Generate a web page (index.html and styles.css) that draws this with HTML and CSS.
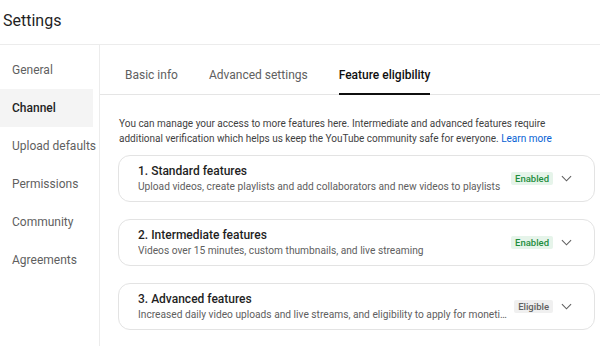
FILE: index.html
```html
<!DOCTYPE html>
<html lang="en">
<head>
<meta charset="UTF-8">
<title>Settings</title>
<meta name="viewport" content="width=device-width, initial-scale=1.0">
<link rel="stylesheet" href="styles.css">
</head>

<body>

<header class="top">
<h1>Settings</h1>
</header>

<div class="main">

<nav class="side">
<a class="item">General</a>
<a class="item on">Channel</a>
<a class="item">Upload defaults</a>
<a class="item">Permissions</a>
<a class="item">Community</a>
<a class="item">Agreements</a>
</nav>

<section class="pane">

<div class="tabs">
<span class="tab">Basic info</span>
<span class="tab">Advanced settings</span>
<span class="tab on">Feature eligibility</span>
</div>

<div class="body">
<p class="intro">You can manage your access to more features here. Intermediate and advanced features require additional verification which helps us keep the YouTube community safe for everyone. <a class="link">Learn more</a></p>

<div class="card">
<div class="txt">
<b>1. Standard features</b>
<span>Upload videos, create playlists and add collaborators and new videos to playlists</span>
</div>
<span class="badge ok">Enabled</span>
<svg class="chev" viewBox="0 0 12 7"><path d="M1 1l5 5 5-5"/></svg>
</div>

<div class="card">
<div class="txt">
<b>2. Intermediate features</b>
<span>Videos over 15 minutes, custom thumbnails, and live streaming</span>
</div>
<span class="badge ok">Enabled</span>
<svg class="chev" viewBox="0 0 12 7"><path d="M1 1l5 5 5-5"/></svg>
</div>

<div class="card">
<div class="txt">
<b>3. Advanced features</b>
<span>Increased daily video uploads and live streams, and eligibility to apply for monetization</span>
</div>
<span class="badge">Eligible</span>
<svg class="chev" viewBox="0 0 12 7"><path d="M1 1l5 5 5-5"/></svg>
</div>
</div>

</section>
</div>

</body>
</html>
```

FILE: styles.css
```css
*{box-sizing:border-box}
body{margin:0;font-family:Roboto,Arial,sans-serif;background:white;color:#0f0f0f;overflow:hidden}
.top{height:45px;border-bottom:1px solid #ececec;padding:0 3px}
h1{margin:0;font-size:16px;font-weight:400;line-height:41px;color:#1f1f1f}
.main{display:flex;height:301px}
.side{width:100px;border-right:1px solid #ececec;padding-top:6px;padding-right:6px;flex-shrink:0}
.item{display:block;height:38px;line-height:38px;padding-left:12px;font-size:12px;color:#5f5f5f;white-space:nowrap}
.item.on{background:#f4f4f4;color:#1f1f1f;font-weight:500}
.pane{flex:1;min-width:0}
.tabs{display:flex;gap:31px;padding-left:25px;border-bottom:1px solid #e5e5e5;height:50px}
.tab{position:relative;font-size:12px;line-height:15px;padding-top:23px;color:#606060}
.tab.on{color:#0f0f0f;font-weight:500}
.tab.on:after{content:"";position:absolute;left:0;right:0;bottom:-1px;height:2px;background:#0f0f0f}
.body{padding:21px 5px 0 18px}
.intro{max-width:450px;margin:0 0 9px 1px;font-size:10px;line-height:15px;color:#3f3f3f}
.link{color:#065fd4}
.card{display:flex;align-items:center;height:47px;border:1px solid #e3e3e3;border-radius:12px;padding:0 22px 0 19px;margin-bottom:17px}
.txt{flex:1;min-width:0;display:flex;flex-direction:column}
.txt b{font-size:12px;font-weight:500;line-height:16px;color:#1f1f1f}
.txt span{font-size:10.2px;line-height:15px;color:#606060;white-space:nowrap;overflow:hidden;text-overflow:ellipsis}
.badge{margin-left:4px;font-size:9.5px;font-weight:500;line-height:13px;padding:0 4px;border-radius:2px;background:#f0f0f0;color:#606060}
.badge.ok{background:#e6f4ea;color:#1e8e3e}
.chev{width:11px;height:7px;margin-left:8px;fill:none;stroke:#606060;stroke-width:1.2}
```
